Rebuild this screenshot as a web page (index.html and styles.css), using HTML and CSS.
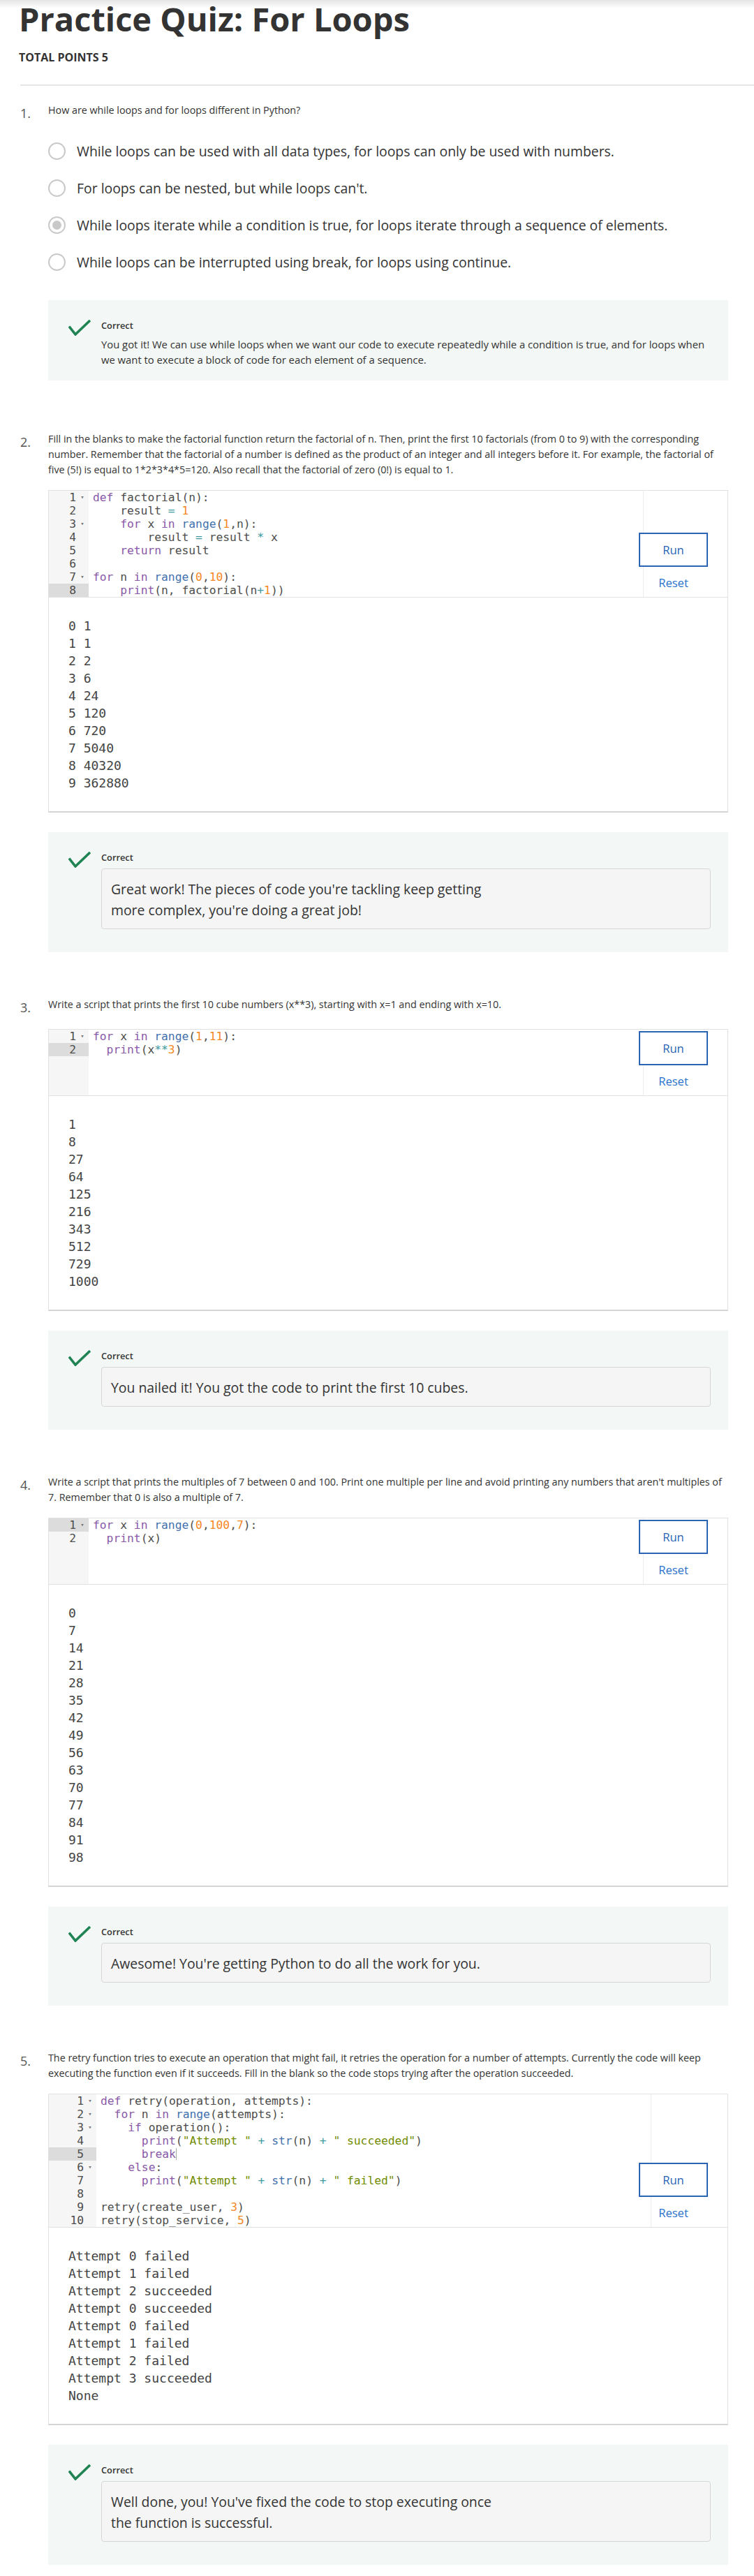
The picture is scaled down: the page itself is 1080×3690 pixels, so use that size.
FILE: index.html
```html
<!DOCTYPE html>
<html lang="en">
<head>
<meta charset="utf-8">
<title>Practice Quiz: For Loops</title>
<link rel="stylesheet" href="styles.css">
</head>
<body>
<div class="topshadow"></div>
<main class="page">
  <header class="quiz-header">
    <h1 class="quiz-title">Practice Quiz: For Loops</h1>
    <div class="total-points">TOTAL POINTS 5</div>
  </header>
  <hr class="divider">

  <section class="question q-first">
    <div class="q-head"><div class="q-num">1.</div><div class="q-text">How are while loops and for loops different in Python?</div></div>
    <div class="q-body">
      <div class="options">
        <div class="option"><span class="radio"></span><span class="opt-text">While loops can be used with all data types, for loops can only be used with numbers.</span></div>
        <div class="option"><span class="radio"></span><span class="opt-text">For loops can be nested, but while loops can't.</span></div>
        <div class="option"><span class="radio checked"></span><span class="opt-text">While loops iterate while a condition is true, for loops iterate through a sequence of elements.</span></div>
        <div class="option"><span class="radio"></span><span class="opt-text">While loops can be interrupted using break, for loops using continue.</span></div>
      </div>
      <div class="feedback">
        <div class="fb-icon"><svg width="32" height="23" viewBox="0 0 32 23"><polyline points="1,9.5 10,21 31,1" fill="none" stroke="#1f8354" stroke-width="3.6"/></svg></div>
        <div class="fb-body">
          <div class="fb-label">Correct</div>
          <div class="fb-text">You got it! We can use while loops when we want our code to execute repeatedly while a condition is true, and for loops when we want to execute a block of code for each element of a sequence.</div>
        </div>
      </div>
    </div>
  </section>

  <section class="question q-second">
    <div class="q-head"><div class="q-num">2.</div><div class="q-text">Fill in the blanks to make the factorial function return the factorial of n. Then, print the first 10 factorials (from 0 to 9) with the corresponding number. Remember that the factorial of a number is defined as the product of an integer and all integers before it. For example, the factorial of five (5!) is equal to 1*2*3*4*5=120. Also recall that the factorial of zero (0!) is equal to 1.</div></div>
    <div class="q-body">
      <div class="editor">
        <div class="gutter">
          <div class="gl"><span class="n">1</span><span class="fold">&#9662;</span></div>
          <div class="gl"><span class="n">2</span><span class="fold"></span></div>
          <div class="gl"><span class="n">3</span><span class="fold">&#9662;</span></div>
          <div class="gl"><span class="n">4</span><span class="fold"></span></div>
          <div class="gl"><span class="n">5</span><span class="fold"></span></div>
          <div class="gl"><span class="n">6</span><span class="fold"></span></div>
          <div class="gl"><span class="n">7</span><span class="fold">&#9662;</span></div>
          <div class="gl active"><span class="n">8</span><span class="fold"></span></div>
        </div>
        <div class="code-area">
          <div class="cl"><span class="kw">def</span> factorial(n):</div>
          <div class="cl">    result <span class="op">=</span> <span class="num">1</span></div>
          <div class="cl">    <span class="kw">for</span> x <span class="kw">in</span> <span class="fn">range</span>(<span class="num">1</span>,n):</div>
          <div class="cl">        result <span class="op">=</span> result <span class="op">*</span> x</div>
          <div class="cl">    <span class="kw">return</span> result</div>
          <div class="cl"></div>
          <div class="cl"><span class="kw">for</span> n <span class="kw">in</span> <span class="fn">range</span>(<span class="num">0</span>,<span class="num">10</span>):</div>
          <div class="cl">    <span class="kw">print</span>(n, factorial(n<span class="op">+</span><span class="num">1</span>))</div>
        </div>
        <div class="runbox"><button class="run">Run</button><button class="reset">Reset</button></div>
      </div>
      <div class="output">
        <div class="ol">0 1</div>
        <div class="ol">1 1</div>
        <div class="ol">2 2</div>
        <div class="ol">3 6</div>
        <div class="ol">4 24</div>
        <div class="ol">5 120</div>
        <div class="ol">6 720</div>
        <div class="ol">7 5040</div>
        <div class="ol">8 40320</div>
        <div class="ol">9 362880</div>
      </div>
      <div class="feedback">
        <div class="fb-icon"><svg width="32" height="23" viewBox="0 0 32 23"><polyline points="1,9.5 10,21 31,1" fill="none" stroke="#1f8354" stroke-width="3.6"/></svg></div>
        <div class="fb-body">
          <div class="fb-label">Correct</div>
          <div class="fb-box">Great work! The pieces of code you're tackling keep getting<br>more complex, you're doing a great job!</div>
        </div>
      </div>
    </div>
  </section>

  <section class="question">
    <div class="q-head"><div class="q-num">3.</div><div class="q-text">Write a script that prints the first 10 cube numbers (x**3), starting with x=1 and ending with x=10.</div></div>
    <div class="q-body">
      <div class="editor">
        <div class="gutter">
          <div class="gl"><span class="n">1</span><span class="fold">&#9662;</span></div>
          <div class="gl active"><span class="n">2</span><span class="fold"></span></div>
        </div>
        <div class="code-area">
          <div class="cl"><span class="kw">for</span> x <span class="kw">in</span> <span class="fn">range</span>(<span class="num">1</span>,<span class="num">11</span>):</div>
          <div class="cl">  <span class="kw">print</span>(x<span class="op">**</span><span class="num">3</span>)</div>
        </div>
        <div class="runbox"><button class="run">Run</button><button class="reset">Reset</button></div>
      </div>
      <div class="output">
        <div class="ol">1</div>
        <div class="ol">8</div>
        <div class="ol">27</div>
        <div class="ol">64</div>
        <div class="ol">125</div>
        <div class="ol">216</div>
        <div class="ol">343</div>
        <div class="ol">512</div>
        <div class="ol">729</div>
        <div class="ol">1000</div>
      </div>
      <div class="feedback">
        <div class="fb-icon"><svg width="32" height="23" viewBox="0 0 32 23"><polyline points="1,9.5 10,21 31,1" fill="none" stroke="#1f8354" stroke-width="3.6"/></svg></div>
        <div class="fb-body">
          <div class="fb-label">Correct</div>
          <div class="fb-box">You nailed it! You got the code to print the first 10 cubes.</div>
        </div>
      </div>
    </div>
  </section>

  <section class="question">
    <div class="q-head"><div class="q-num">4.</div><div class="q-text">Write a script that prints the multiples of 7 between 0 and 100. Print one multiple per line and avoid printing any numbers that aren't multiples of 7. Remember that 0 is also a multiple of 7.</div></div>
    <div class="q-body">
      <div class="editor">
        <div class="gutter">
          <div class="gl active"><span class="n">1</span><span class="fold">&#9662;</span></div>
          <div class="gl"><span class="n">2</span><span class="fold"></span></div>
        </div>
        <div class="code-area">
          <div class="cl"><span class="kw">for</span> x <span class="kw">in</span> <span class="fn">range</span>(<span class="num">0</span>,<span class="num">100</span>,<span class="num">7</span>):</div>
          <div class="cl">  <span class="kw">print</span>(x)</div>
        </div>
        <div class="runbox"><button class="run">Run</button><button class="reset">Reset</button></div>
      </div>
      <div class="output">
        <div class="ol">0</div>
        <div class="ol">7</div>
        <div class="ol">14</div>
        <div class="ol">21</div>
        <div class="ol">28</div>
        <div class="ol">35</div>
        <div class="ol">42</div>
        <div class="ol">49</div>
        <div class="ol">56</div>
        <div class="ol">63</div>
        <div class="ol">70</div>
        <div class="ol">77</div>
        <div class="ol">84</div>
        <div class="ol">91</div>
        <div class="ol">98</div>
      </div>
      <div class="feedback">
        <div class="fb-icon"><svg width="32" height="23" viewBox="0 0 32 23"><polyline points="1,9.5 10,21 31,1" fill="none" stroke="#1f8354" stroke-width="3.6"/></svg></div>
        <div class="fb-body">
          <div class="fb-label">Correct</div>
          <div class="fb-box">Awesome! You're getting Python to do all the work for you.</div>
        </div>
      </div>
    </div>
  </section>

  <section class="question">
    <div class="q-head"><div class="q-num">5.</div><div class="q-text">The retry function tries to execute an operation that might fail, it retries the operation for a number of attempts. Currently the code will keep executing the function even if it succeeds. Fill in the blank so the code stops trying after the operation succeeded.</div></div>
    <div class="q-body">
      <div class="editor">
        <div class="gutter wide">
          <div class="gl"><span class="n">1</span><span class="fold">&#9662;</span></div>
          <div class="gl"><span class="n">2</span><span class="fold">&#9662;</span></div>
          <div class="gl"><span class="n">3</span><span class="fold">&#9662;</span></div>
          <div class="gl"><span class="n">4</span><span class="fold"></span></div>
          <div class="gl active"><span class="n">5</span><span class="fold"></span></div>
          <div class="gl"><span class="n">6</span><span class="fold">&#9662;</span></div>
          <div class="gl"><span class="n">7</span><span class="fold"></span></div>
          <div class="gl"><span class="n">8</span><span class="fold"></span></div>
          <div class="gl"><span class="n">9</span><span class="fold"></span></div>
          <div class="gl"><span class="n">10</span><span class="fold"></span></div>
        </div>
        <div class="code-area">
          <div class="cl"><span class="kw">def</span> retry(operation, attempts):</div>
          <div class="cl">  <span class="kw">for</span> n <span class="kw">in</span> <span class="fn">range</span>(attempts):</div>
          <div class="cl">    <span class="kw">if</span> operation():</div>
          <div class="cl">      <span class="kw">print</span>(<span class="str">"Attempt "</span> <span class="op">+</span> <span class="fn">str</span>(n) <span class="op">+</span> <span class="str">" succeeded"</span>)</div>
          <div class="cl">      <span class="kw">break</span><span class="cursor"></span></div>
          <div class="cl">    <span class="kw">else</span>:</div>
          <div class="cl">      <span class="kw">print</span>(<span class="str">"Attempt "</span> <span class="op">+</span> <span class="fn">str</span>(n) <span class="op">+</span> <span class="str">" failed"</span>)</div>
          <div class="cl"></div>
          <div class="cl">retry(create_user, <span class="num">3</span>)</div>
          <div class="cl">retry(stop_service, <span class="num">5</span>)</div>
        </div>
        <div class="runbox"><button class="run">Run</button><button class="reset">Reset</button></div>
      </div>
      <div class="output">
        <div class="ol">Attempt 0 failed</div>
        <div class="ol">Attempt 1 failed</div>
        <div class="ol">Attempt 2 succeeded</div>
        <div class="ol">Attempt 0 succeeded</div>
        <div class="ol">Attempt 0 failed</div>
        <div class="ol">Attempt 1 failed</div>
        <div class="ol">Attempt 2 failed</div>
        <div class="ol">Attempt 3 succeeded</div>
        <div class="ol">None</div>
      </div>
      <div class="feedback">
        <div class="fb-icon"><svg width="32" height="23" viewBox="0 0 32 23"><polyline points="1,9.5 10,21 31,1" fill="none" stroke="#1f8354" stroke-width="3.6"/></svg></div>
        <div class="fb-body">
          <div class="fb-label">Correct</div>
          <div class="fb-box">Well done, you! You've fixed the code to stop executing once<br>the function is successful.</div>
        </div>
      </div>
    </div>
  </section>
</main>
</body>
</html>
```

FILE: styles.css
```css
* { box-sizing: border-box; }
html, body { margin: 0; padding: 0; background: #fff; }
body {
  font-family: "Open Sans", "Noto Sans", sans-serif;
  color: #333;
  position: relative;
}
.topshadow {
  position: absolute;
  top: 0; left: 0; right: 0;
  height: 12px;
  background: linear-gradient(to bottom, rgba(0,0,0,0.10), rgba(0,0,0,0));
  pointer-events: none;
}
.page { padding: 0 37px 0 27px; }
.quiz-title {
  margin: 0;
  font-size: 47px;
  line-height: 54px;
  font-weight: 700;
  color: #333;
}
.total-points {
  margin-top: 18px;
  font-size: 16px;
  line-height: 20px;
  font-weight: 700;
  color: #333;
}
.divider {
  margin: 29px -37px 0 2px;
  border: 0;
  height: 2px;
  background: #e6e6e6;
}

.question { margin-top: 64px; margin-left: 2px; }
.question.q-first { margin-top: 24px; }
.question.q-second { margin-top: 73px; }
.q-head { display: flex; align-items: flex-start; }
.q-num {
  width: 40px;
  flex: none;
  font-size: 18px;
  line-height: 26px;
  margin-top: 2px;
  color: #555;
}
.q-text {
  flex: 1;
  font-size: 14.3px;
  line-height: 22px;
  color: #333;
}
.q-body { margin-left: 40px; }

.options { margin-top: 15px; }
.option { display: flex; align-items: center; height: 53px; }
.radio {
  width: 25px; height: 25px;
  flex: none;
  border: 2px solid #c9c9c9;
  border-radius: 50%;
  margin-right: 16px;
  display: flex; align-items: center; justify-content: center;
}
.radio.checked::after {
  content: "";
  width: 13px; height: 13px;
  border-radius: 50%;
  background: #c9c9c9;
}
.opt-text { font-size: 19.4px; color: #333; }

.feedback {
  margin-top: 28px;
  background: #f3f8f6;
  padding: 27px 25px 19px 29px;
  display: flex;
}
.fb-icon { width: 47px; flex: none; padding-top: 1px; }
.fb-icon svg { display: block; }
.fb-body { flex: 1; }
.fb-label { font-size: 12.8px; line-height: 18px; font-weight: 600; color: #333; }
.fb-text { margin-top: 7px; font-size: 14.8px; line-height: 22px; color: #333; }
.fb-box {
  margin-top: 7px;
  margin-bottom: 14px;
  background: #f5f5f5;
  border: 1px solid #d6d6d6;
  border-radius: 4px;
  padding: 14px 13px 11px;
  font-size: 19.4px;
  line-height: 30px;
  color: #333;
}

.editor {
  margin-top: 18px;
  position: relative;
  display: flex;
  min-height: 96px;
  border: 1px solid #e2e2e2;
  overflow: hidden;
  font-family: "DejaVu Sans Mono", "Liberation Mono", monospace;
  font-size: 16.3px;
  line-height: 19px;
  color: #4d4d4c;
  background: #fff;
}
.gutter {
  width: 57px;
  flex: none;
  background: #f6f6f6;
  color: #4d4d4c;
}
.gutter.wide { width: 68px; }
.gl { display: flex; justify-content: flex-end; height: 19px; }
.gl.active { background: #dcdcdc; }
.gl .fold {
  width: 18px;
  text-align: center;
  font-size: 9px;
  color: #777;
}
.code-area {
  flex: 1;
  padding-left: 6px;
  background: linear-gradient(to right, transparent calc(10px + 80ch), #ececec calc(10px + 80ch), #ececec calc(11px + 80ch), transparent calc(11px + 80ch));
}
.cl {
  height: 19px;
  white-space: pre;
}
.kw { color: #8959a8; }
.fn { color: #4271ae; }
.num { color: #f5871f; }
.str { color: #718c00; }
.op { color: #3e999f; }
.cursor { display: inline-block; width: 1px; height: 17px; background: #aaa; vertical-align: -3px; }

.runbox {
  position: absolute;
  right: 28px;
  bottom: 10px;
  display: flex;
  flex-direction: column;
  align-items: center;
}
.run {
  width: 99px;
  height: 49px;
  border: 2px solid #2b64b5;
  background: #fff;
  color: #2b64b5;
  font-family: "Open Sans", sans-serif;
  font-size: 16.6px;
  padding: 0;
}
.reset {
  margin-top: 13px;
  border: 0;
  background: none;
  padding: 0;
  color: #2a73cc;
  font-family: "Open Sans", sans-serif;
  font-size: 16.6px;
  line-height: 20px;
}

.output {
  border: 1px solid #e2e2e2;
  border-top: 0;
  border-bottom: 2px solid #d5d5d5;
  padding: 28px;
  font-family: "DejaVu Sans Mono", "Liberation Mono", monospace;
  font-size: 18px;
  line-height: 25px;
  color: #444;
}
.ol { height: 25px; white-space: pre; }
```
